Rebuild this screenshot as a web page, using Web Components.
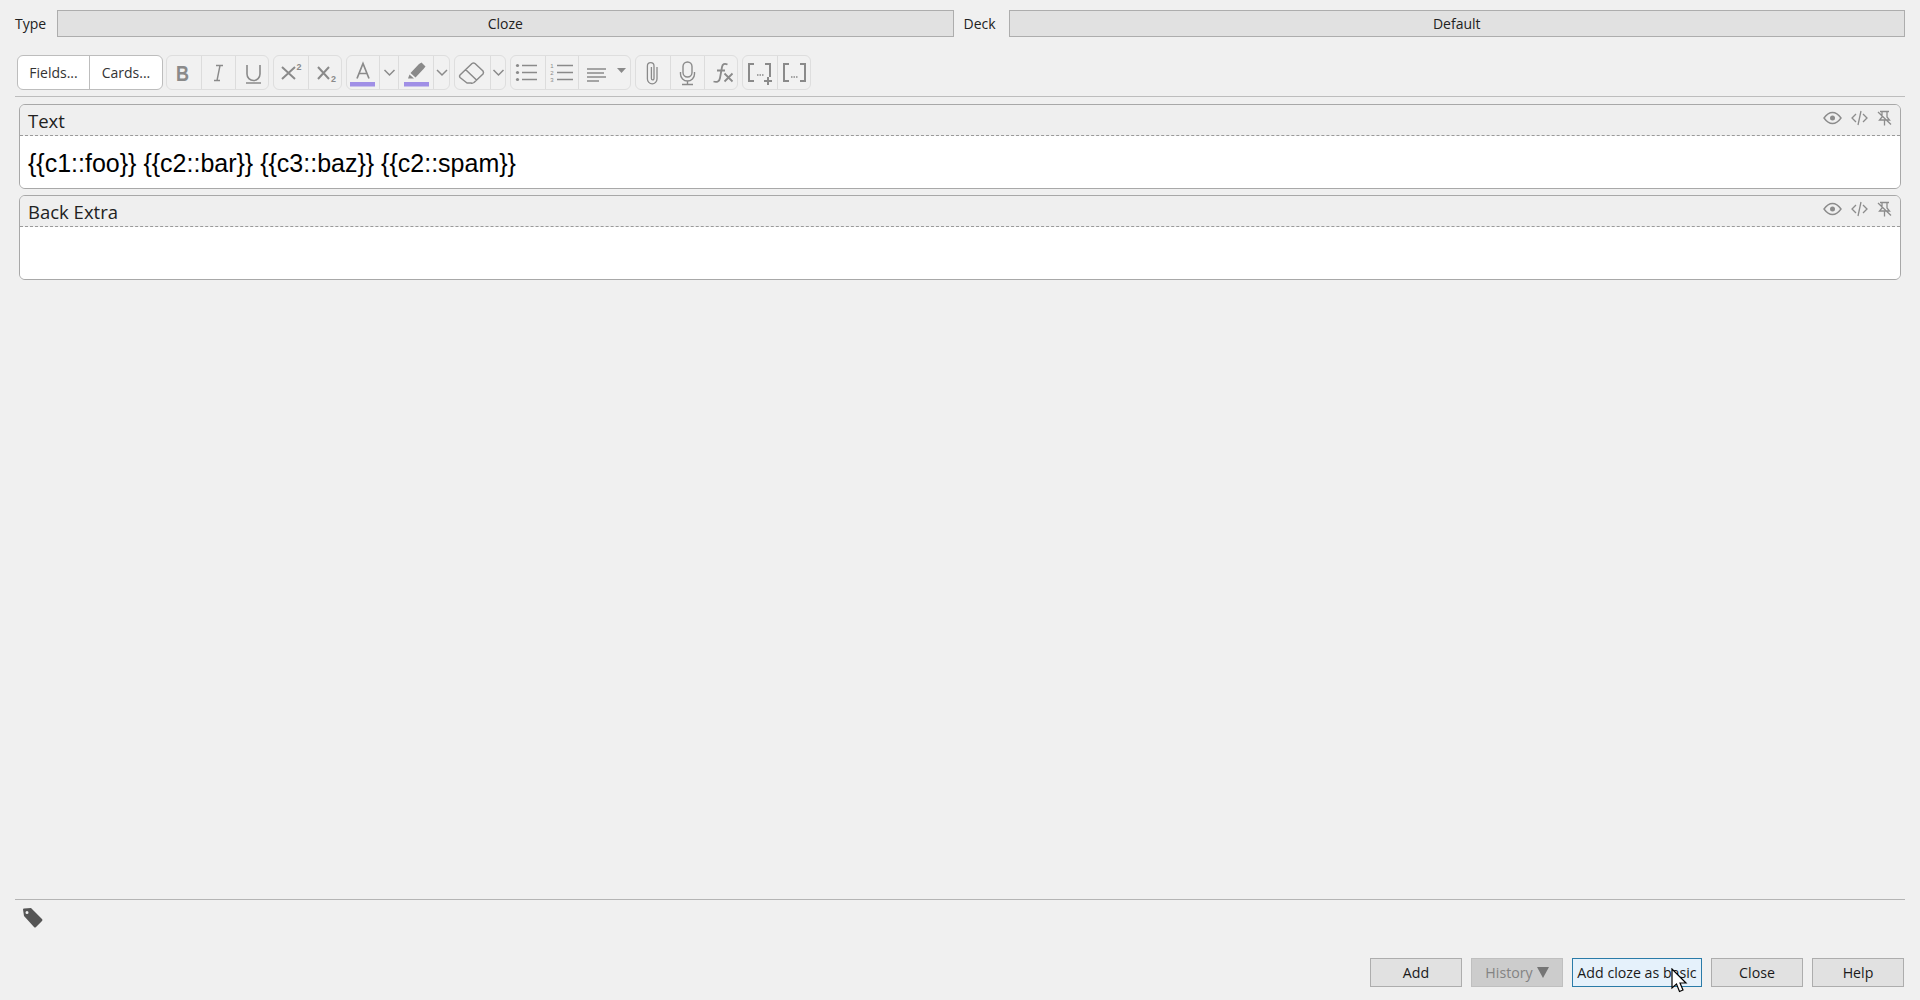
<!DOCTYPE html>
<html>
<head>
<meta charset="utf-8">
<title>Add</title>
<style>
    html, body { margin: 0; height: 100%; }
    body { background: #f0f0f0; font-family: "Open Sans", "Noto Sans", sans-serif; overflow: hidden; }
</style>
</head>
<body>
<add-dialog>
    <type-row></type-row>
    <edit-toolbar></edit-toolbar>
    <field-box name="Text">{{c1::foo}} {{c2::bar}} {{c3::baz}} {{c2::spam}}</field-box>
    <field-box name="Back Extra"></field-box>
    <tag-row></tag-row>
    <button-row></button-row>
</add-dialog>

<script>
const GREY = '#8a8a8a'
const ICONS = {
    bold: `<text x="15.500" y="25" text-anchor="middle" textLength="13" lengthAdjust="spacingAndGlyphs" font-family="Liberation Sans" font-weight="700" font-size="22" fill="${GREY}">B</text>`,
    italic: `<path d="M14 9.500h7M12 24.500h6M18 9.500l-3 15" fill="none" stroke="${GREY}" stroke-width="1.400"/>`,
    underline: `<path d="M11 9v9a6.500 6.500 0 0 0 13 0V9" fill="none" stroke="${GREY}" stroke-width="1.600"/><path d="M10 27h15" stroke="${GREY}" stroke-width="1.600"/>`,
    sup: `<path d="M8 11l13 12M21 11L8 23" stroke="${GREY}" stroke-width="2" fill="none"/><text x="25" y="14" text-anchor="middle" font-family="Liberation Sans" font-weight="700" font-size="9" fill="${GREY}">2</text>`,
    sub: `<path d="M9 11l11 12M20 11L9 23" stroke="${GREY}" stroke-width="2" fill="none"/><text x="24.500" y="26" text-anchor="middle" font-family="Liberation Sans" font-weight="700" font-size="9" fill="${GREY}">2</text>`,
    color: `<path d="M10 22.500L16 7.500L22 22.500M12 17.500h8" fill="none" stroke="${GREY}" stroke-width="1.700"/><rect x="3" y="26" width="25" height="4.500" fill="#a08fe6"/>`,
    chevron: w => `<path d="M${w / 2 - 5} 14l5 5 5-5" fill="none" stroke="${GREY}" stroke-width="1.500"/>`,
    marker: `<path d="M20 8L22.500 6.500L26.500 10.500L24.500 13L16.500 21.500L11.500 17zM10.500 18.500L15 22.500H9z" fill="${GREY}"/><rect x="5" y="26" width="25" height="4.500" fill="#a08fe6"/>`,
    eraser: `<path d="M5 19L17 7.500Q18.500 6.500 20 7.500L28 15Q29 16.500 28 18L19 26.500Q17.500 27.500 16 27H12L5 21.500Q4 20 5 19zM10.500 13.500L21.500 24" fill="none" stroke="${GREY}" stroke-width="1.500" stroke-linejoin="round"/>`,
    ul: `<circle cx="6.500" cy="9.500" r="1.600" fill="${GREY}"/><circle cx="6.500" cy="16.500" r="1.600" fill="${GREY}"/><circle cx="6.500" cy="23.500" r="1.600" fill="${GREY}"/><path d="M11 9.500h15M11 16.500h15M11 23.500h15" stroke="${GREY}" stroke-width="1.400"/>`,
    ol: `<g font-family="Liberation Sans" font-size="6" fill="${GREY}" text-anchor="middle"><text x="6" y="11.500">1</text><text x="6" y="18.500">2</text><text x="6" y="25.500">3</text></g><path d="M11 9.500h16M11 16.500h16M11 23.500h16" stroke="${GREY}" stroke-width="1.400"/>`,
    align: `<path d="M8 13h19M8 17h17M8 21h19M8 25h12" stroke="${GREY}" stroke-width="1.300"/><path d="M38 12h9l-4.500 5z" fill="${GREY}"/>`,
    clip: `<path d="M21 11v12a4.800 4.800 0 0 1-9.600 0V10a3.300 3.300 0 0 1 6.600 0v12.500a1.300 1.300 0 0 1-2.600 0V11" fill="none" stroke="${GREY}" stroke-width="1.300"/>`,
    mic: `<rect x="12" y="6" width="9" height="15" rx="4.500" fill="none" stroke="${GREY}" stroke-width="1.400"/><path d="M9.500 16v2a7 7 0 0 0 14 0v-2M16.500 25v3.500M11 28.500h11" fill="none" stroke="${GREY}" stroke-width="1.400"/>`,
    fx: `<path d="M22.500 8.500c-3-1.500-5-.5-5.500 2.500l-2 11c-.5 3.500-3 4.500-6.500 3.500M12 14.500h8" fill="none" stroke="${GREY}" stroke-width="1.800"/><path d="M19.500 17.500l8 8M27.500 17.500l-8 8" stroke="${GREY}" stroke-width="1.800"/>`,
    clozeNew: `<path d="M11 8H6v17h5M22 8h5v13" fill="none" stroke="${GREY}" stroke-width="2"/><path d="M14 19h1.500M16.500 19H18M19 19h1.500" stroke="${GREY}" stroke-width="1.300"/><path d="M25 21v8M21 25h8" stroke="${GREY}" stroke-width="2"/>`,
    clozeSame: `<path d="M11 8H6v17h5M22 8h5v17h-5" fill="none" stroke="${GREY}" stroke-width="2"/><path d="M13 21h1.500M15.500 21H17M18 21h1.500" stroke="${GREY}" stroke-width="1.300"/>`
}

class AddDialog extends HTMLElement {
    constructor() {
        super()
        this.attachShadow({ mode: 'open' })
        this.shadowRoot.innerHTML = `
            <style>
                :host { display: flex; flex-direction: column; height: 1000px; box-sizing: border-box; padding: 9px 15px 14px; position: relative; }
            </style>
            <slot></slot>
        `
    }
}

class TypeRow extends HTMLElement {
    constructor() {
        super()
        this.attachShadow({ mode: 'open' })
        this.shadowRoot.innerHTML = `
            <style>
                :host { display: flex; align-items: center; font-size: 14px; color: #222; height: 28px; }
                .lbl { width: 42px; }
                .deck { width: 45px; margin-left: 10px; }
                .combo {
                    flex: 1; height: 27px; box-sizing: border-box; display: flex; align-items: center; justify-content: center;
                    background: #e1e1e1; border: 1px solid #adadad;
                }
            </style>
            <span class="lbl">Type</span>
            <div class="combo">Cloze</div>
            <span class="deck">Deck</span>
            <div class="combo">Default</div>
        `
    }
}

class ToolGroup extends HTMLElement {
    constructor() {
        super()
        this.attachShadow({ mode: 'open' })
        this.shadowRoot.innerHTML = `
            <style>
                :host { display: flex; height: 35px; box-sizing: border-box; border: 1px solid #dedede; border-radius: 6px; background: #f1f1f1; overflow: hidden; }
                :host([plain]) { background: #fff; border-color: #bdbdbd; margin-right: -1px; }
            </style>
            <slot></slot>
        `
    }
}

class ToolBtn extends HTMLElement {
    constructor() {
        super()
        this.attachShadow({ mode: 'open' })
        const w = Number(this.getAttribute('w') || 34)
        const found = ICONS[this.getAttribute('icon')] || ''
        const icon = typeof found == 'function' ? found(w) : found
        const label = this.getAttribute('label')
        this.shadowRoot.innerHTML = `
            <style>
                :host { display: flex; align-items: center; justify-content: center; box-sizing: border-box; width: ${w}px; height: 100%; border-left: 1px solid #dcdcdc; font-size: 14px; color: #333; }
                :host(:first-child) { border-left: 0; }
                :host([label]) { border-color: #bdbdbd; }
                svg { display: block; flex: none; }
            </style>
            ${label ? label : `<svg width="${w}" height="33" viewBox="0 0 ${w} 33">${icon}</svg>`}
        `
    }
}

class EditToolbar extends HTMLElement {
    constructor() {
        super()
        this.attachShadow({ mode: 'open' })
        this.shadowRoot.innerHTML = `
            <style>
                :host { display: flex; gap: 4px; padding: 0 0 6px 2px; margin: 18px 0 7px; border-bottom: 1px solid #bdbdbd; }
            </style>
            <tool-group plain><tool-btn w="71" label="Fields..."></tool-btn><tool-btn w="73" label="Cards..."></tool-btn></tool-group>
            <tool-group><tool-btn icon="bold"></tool-btn><tool-btn icon="italic"></tool-btn><tool-btn icon="underline" w="33"></tool-btn></tool-group>
            <tool-group><tool-btn icon="sup"></tool-btn><tool-btn icon="sub" w="33"></tool-btn></tool-group>
            <tool-group><tool-btn icon="color" w="32"></tool-btn><tool-btn icon="chevron" w="19"></tool-btn><tool-btn icon="marker" w="35"></tool-btn><tool-btn icon="chevron" w="16"></tool-btn></tool-group>
            <tool-group><tool-btn icon="eraser" w="35"></tool-btn><tool-btn icon="chevron" w="15"></tool-btn></tool-group>
            <tool-group><tool-btn icon="ul"></tool-btn><tool-btn icon="ol" w="33"></tool-btn><tool-btn icon="align" w="52"></tool-btn></tool-group>
            <tool-group><tool-btn icon="clip"></tool-btn><tool-btn icon="mic"></tool-btn><tool-btn icon="fx" w="33"></tool-btn></tool-group>
            <tool-group><tool-btn icon="clozeNew"></tool-btn><tool-btn icon="clozeSame" w="33"></tool-btn></tool-group>
        `
    }
}

class FieldBox extends HTMLElement {
    constructor() {
        super()
        this.attachShadow({ mode: 'open' })
        this.shadowRoot.innerHTML = `
            <style>
                :host { display: block; width: 1882px; margin: 0 0 6px 4px; box-sizing: border-box; height: 85px; border: 1px solid #a8a8a8; border-radius: 6px; overflow: hidden; }
                .head { height: 31px; box-sizing: border-box; display: flex; align-items: center; justify-content: space-between; padding: 0 7px 0 8px; background: #efefef; border-bottom: 1px dashed #9a9a9a; font-size: 18.500px; color: #222; }
                .icons { display: flex; align-items: center; gap: 9px; margin-top: -5px; margin-right: 1px; }
                svg { display: block; }
                .body { height: 52px; box-sizing: border-box; padding: 12px 8px; background: #fff; font: 25px/30px "Liberation Sans", sans-serif; color: #000; }
            </style>
            <div class="head">
                <span></span>
                <div class="icons">
                    <svg width="19" height="14" viewBox="0 0 19 14"><path d="M1 7c2.500-3.500 5.500-5.500 8.500-5.500S15.500 3.500 18 7c-2.500 3.500-5.500 5.500-8.500 5.500S3.500 10.500 1 7z" fill="none" stroke="#8c8c8c" stroke-width="1.400"/><circle cx="9.500" cy="7" r="2.500" fill="#8c8c8c"/></svg>
                    <svg width="17" height="16" viewBox="0 0 17 16"><path d="M5 4L1 8l4 4M12 4l4 4-4 4M10 1L7 15" fill="none" stroke="#8c8c8c" stroke-width="1.300"/></svg>
                    <svg width="15" height="16" viewBox="0 0 15 16"><path d="M3 1.500h9M5 2v5l-2.500 3h10L10 7V2M7.500 10v5.500M1 2l13 12.500" fill="none" stroke="#8c8c8c" stroke-width="1.300"/></svg>
                </div>
            </div>
            <div class="body"><slot></slot></div>
        `
        this.shadowRoot.querySelector('.head span').textContent = this.getAttribute('name')
    }
}

class TagRow extends HTMLElement {
    constructor() {
        super()
        this.attachShadow({ mode: 'open' })
        this.shadowRoot.innerHTML = `
            <style>
                :host { display: block; margin-top: auto; border-top: 1px solid #b4b4b4; padding: 8px 0 0 8px; height: 49px; }
                svg { display: block; }
            </style>
            <svg width="20" height="20" viewBox="0 0 20 20"><path fill-rule="evenodd" fill="#555" d="M0 1.500Q0 .5 1 .5L8 0l11 11q1 1 0 2l-6 6q-1 1-2 0L1 8zM4 3a1.500 1.500 0 1 0 0 3 1.500 1.500 0 0 0 0-3z"/></svg>
        `
    }
}

class DlgButton extends HTMLElement {
    constructor() {
        super()
        this.attachShadow({ mode: 'open' })
        this.shadowRoot.innerHTML = `
            <style>
                :host { display: flex; align-items: center; justify-content: center; box-sizing: border-box; width: 92px; height: 29px; background: #e1e1e1; border: 1px solid #adadad; font-size: 14.200px; color: #1a1a1a; white-space: nowrap; position: relative; }
                :host([disabled]) { background: #cccccc; border-color: #bfbfbf; color: #838383; }
                :host([focused]) { width: 130px; background: #e5f1fb; border-color: #2a7ba8; }
            </style>
            <slot></slot>
        `
    }
}

class ButtonRow extends HTMLElement {
    constructor() {
        super()
        this.attachShadow({ mode: 'open' })
        this.shadowRoot.innerHTML = `
            <style>
                :host { display: flex; justify-content: flex-end; gap: 9px; padding-right: 1px; margin-top: 1px; margin-bottom: -1px; }
                .cursor { position: absolute; left: 98px; top: 9px; }
                .tri { width: 0; height: 0; margin-left: 4px; border: 6.500px solid transparent; border-bottom: 0; border-top: 11px solid #757575; }
            </style>
            <dlg-button>Add</dlg-button>
            <dlg-button disabled>History<span class="tri"></span></dlg-button>
            <dlg-button focused>Add cloze as basic
                <svg class="cursor" width="18" height="26" viewBox="0 0 18 26"><path d="M1 1v19l4.500-4 3 7.500 3.500-1.500-3-7h6z" fill="#fff" stroke="#000" stroke-width="1.200"/></svg>
            </dlg-button>
            <dlg-button>Close</dlg-button>
            <dlg-button>Help</dlg-button>
        `
    }
}

customElements.define('add-dialog', AddDialog)
customElements.define('type-row', TypeRow)
customElements.define('tool-group', ToolGroup)
customElements.define('tool-btn', ToolBtn)
customElements.define('edit-toolbar', EditToolbar)
customElements.define('field-box', FieldBox)
customElements.define('tag-row', TagRow)
customElements.define('dlg-button', DlgButton)
customElements.define('button-row', ButtonRow)
</script>
</body>
</html>
